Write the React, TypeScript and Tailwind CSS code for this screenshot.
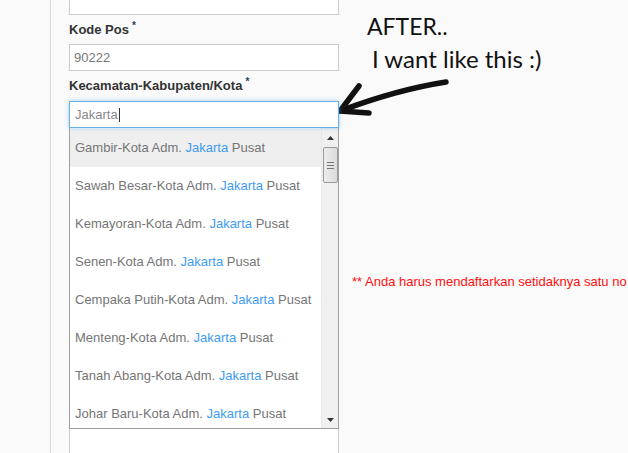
import React from "react";

const items = [
  ["Gambir", true],
  ["Sawah Besar", false],
  ["Kemayoran", false],
  ["Senen", false],
  ["Cempaka Putih", false],
  ["Menteng", false],
  ["Tanah Abang", false],
  ["Johar Baru", false],
] as const;

function Label({ text }: { text: string }) {
  return (
    <div className="text-[13px] leading-[18px] font-bold text-[#333]">
      {text}
      <span className="relative -top-[5px] ml-[3px] text-[10px] font-bold text-[#2c3e50]">*</span>
    </div>
  );
}

export default function App() {
  return (
    <div
      className="relative w-[628px] h-[453px] overflow-hidden bg-[#fafafa] flex"
      style={{ fontFamily: '"Liberation Sans", Arial, sans-serif' }}
    >
      <div className="w-[50px] shrink-0" />
      <div className="w-[290px] shrink-0 border-l border-[#dcdcdc] pl-[18px] flex flex-col">
        <div className="shrink-0 -mt-[12px] h-[27px] w-[270px] border border-[#cccccc] bg-white" />
        <div className="shrink-0 mt-[6px]">
          <Label text="Kode Pos" />
        </div>
        <div className="shrink-0 mt-[4px] h-[27px] w-[270px] border border-[#cccccc] bg-white flex items-center pl-[4px] text-[13px] text-[#777]">
          90222
        </div>
        <div className="shrink-0 mt-[6px]">
          <Label text="Kecamatan-Kabupaten/Kota" />
        </div>
        <div className="shrink-0 mt-[5px] h-[27px] w-[270px] border border-[#6aaee6] bg-white flex items-center pl-[5px] text-[13px] text-[#8a8a8a] shadow-[0_0_4px_rgba(102,175,233,0.6)] relative z-10">
          Jakarta
          <span className="inline-block w-px h-[14px] bg-[#333] ml-px" />
        </div>
        <div className="shrink-0 h-[301px] w-[270px] border border-t-0 border-[#a0a0a0] bg-white flex overflow-hidden">
          <div className="flex-1 flex flex-col pt-[1px] overflow-hidden">
            {items.map(([name, hl]) => (
              <div
                key={name}
                className={`h-[38px] shrink-0 flex items-center pl-[5px] text-[13px] text-[#757575] ${hl ? "bg-[#efefef]" : ""}`}
              >
                <span className="whitespace-nowrap">
                  {name}-Kota Adm. <span className="text-[#3e9bf4]">Jakarta</span> Pusat
                </span>
              </div>
            ))}
          </div>
          <div className="w-[17px] shrink-0 bg-[#f0f0f0] border-l border-[#e8e8e8] flex flex-col items-center">
            <div className="h-[19px] w-full flex items-center justify-center">
              <svg width="7" height="4" viewBox="0 0 7 4">
                <path d="M0 4 L3.5 0 L7 4 Z" fill="#333" />
              </svg>
            </div>
            <div className="w-[15px] h-[36px] rounded-[2px] border border-[#9a9a9a] bg-gradient-to-r from-[#ececec] to-[#dcdcdc] flex flex-col items-center justify-center gap-[2px]">
              <div className="w-[7px] h-px bg-[#777]" />
              <div className="w-[7px] h-px bg-[#777]" />
              <div className="w-[7px] h-px bg-[#777]" />
            </div>
            <div className="flex-1" />
            <div className="h-[17px] w-full flex items-center justify-center">
              <svg width="7" height="4" viewBox="0 0 7 4">
                <path d="M0 0 L7 0 L3.5 4 Z" fill="#333" />
              </svg>
            </div>
          </div>
        </div>
        <div className="shrink-0 h-[40px] w-[270px] border border-t-0 border-[#cccccc] bg-white" />
      </div>
      <div className="flex-1 flex flex-col">
        <div
          className="shrink-0 ml-[27px] mt-[11px] text-[23px] leading-[30px] text-[#111]"
          style={{ fontFamily: "Lato, sans-serif" }}
        >
          AFTER..
        </div>
        <div
          className="shrink-0 ml-[32px] mt-[3px] text-[24px] leading-[30px] text-[#111]"
          style={{ fontFamily: "Lato, sans-serif" }}
        >
          I want like this :)
        </div>
        <div className="shrink-0 ml-[12px] mt-[200px] text-[13px] leading-[15px] text-[#ff1010] whitespace-nowrap">
          ** Anda harus mendaftarkan setidaknya satu no
        </div>
      </div>
      <svg className="absolute left-0 top-0 pointer-events-none" width="628" height="453">
        <g
          fill="none"
          stroke="#111"
          strokeWidth="5.5"
          strokeLinecap="round"
          strokeLinejoin="round"
          style={{ filter: "blur(0.4px)" }}
        >
          <path d="M446 82 C 420 86, 380 96, 340 111" />
          <path d="M359 86 L340 111 L369 113" />
        </g>
      </svg>
    </div>
  );
}
